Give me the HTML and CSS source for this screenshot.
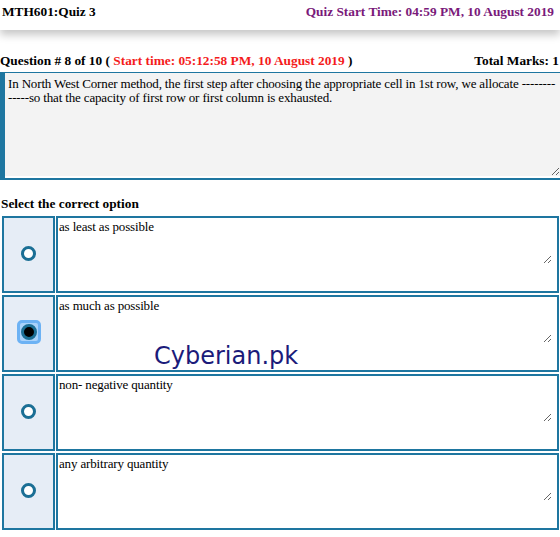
FILE: index.html
```html
<!DOCTYPE html>
<html lang="en">
<head>
<meta charset="utf-8">
<title>MTH601:Quiz 3</title>
<link rel="stylesheet" href="styles.css">
</head>
<body>
<header class="top">
  <span class="quiz-title">MTH601:Quiz 3</span>
  <span class="quiz-start">Quiz Start Time: 04:59 PM, 10 August 2019</span>
</header>
<main class="content">
  <div class="q-line">
    <span>Question # 8 of 10 ( <span class="q-time">Start time: 05:12:58 PM, 10 August 2019</span> )</span>
    <span>Total Marks: 1</span>
  </div>
  <div class="q-box">
    <textarea class="q-text" readonly>In North West Corner method, the first step after choosing the appropriate cell in 1st row, we allocate -------------so that the capacity of first row or first column is exhausted.</textarea>
  </div>
  <div class="select-label">Select the correct option</div>
  <div class="options">
    <div class="opt-radio"><span class="radio"></span></div>
    <div class="opt-cell"><textarea class="opt-text" readonly>as least as possible</textarea></div>
    <div class="opt-radio"><span class="focus-ring"><span class="radio checked"></span></span></div>
    <div class="opt-cell"><textarea class="opt-text" readonly>as much as possible</textarea></div>
    <div class="opt-radio"><span class="radio"></span></div>
    <div class="opt-cell"><textarea class="opt-text" readonly>non- negative quantity</textarea></div>
    <div class="opt-radio"><span class="radio"></span></div>
    <div class="opt-cell"><textarea class="opt-text" readonly>any arbitrary quantity</textarea></div>
  </div>
  <div class="watermark">Cyberian.pk</div>
</main>
</body>
</html>
```
FILE: styles.css
```css
html, body {
  margin: 0;
  padding: 0;
  background: #fff;
  overflow: hidden;
}
body {
  font-family: "Liberation Serif", "Times New Roman", serif;
  color: #000;
  width: 560px;
  height: 537px;
}
.top {
  height: 30px;
  box-sizing: border-box;
  display: flex;
  justify-content: space-between;
  align-items: flex-start;
  padding: 3px 6px 0 2px;
  font-weight: bold;
  font-size: 13.33px;
  line-height: 18px;
  box-shadow: 0 5px 8px rgba(0, 0, 0, 0.22);
  position: relative;
  z-index: 1;
}
.quiz-start {
  color: #7a1a7a;
}
.content {
  position: relative;
  padding-top: 22px;
}
.q-line {
  display: flex;
  justify-content: space-between;
  font-weight: bold;
  font-size: 13.33px;
  line-height: 18px;
  padding: 0 1px 2px 0;
}
.q-time {
  color: #f41c1c;
}
.q-box {
  border-top: 1px solid #1e76a0;
  border-left: 5px solid #1e76a0;
  border-bottom: 2px solid #1e76a0;
}
.q-text {
  display: block;
  width: 100%;
  box-sizing: border-box;
  height: 103px;
  margin: 0 0 2px 0;
  border: none;
  background: #f3f3f3;
  font-family: "Liberation Serif", "Times New Roman", serif;
  font-size: 13px;
  letter-spacing: -0.15px;
  line-height: 14px;
  padding: 4px 3px;
  color: #000;
  outline: none;
}
.select-label {
  font-weight: bold;
  font-size: 13.33px;
  line-height: 18px;
  padding: 15px 0 3px 1px;
}
.options {
  display: grid;
  grid-template-columns: 53px 503px;
  grid-auto-rows: 77px;
  column-gap: 1px;
  row-gap: 2px;
  padding-left: 2px;
}
.opt-radio {
  border: 2px solid #1e76a0;
  background: #e6edf6;
  display: flex;
  align-items: center;
  justify-content: center;
  padding-bottom: 3px;
}
.radio {
  width: 15px;
  height: 15px;
  border: 3px solid #1b6f95;
  border-radius: 50%;
  box-sizing: border-box;
  background: #fff;
}
.focus-ring {
  width: 24px;
  height: 24px;
  box-sizing: border-box;
  border: 3px solid #6cb2f4;
  border-radius: 5px;
  background: #a9d2fa;
  display: flex;
  align-items: center;
  justify-content: center;
}
.radio.checked {
  width: 16px;
  height: 16px;
  border: 3px solid #1b6f95;
  background: #000;
}
.opt-cell {
  border: 2px solid #1e76a0;
  background: #fff;
}
.opt-text {
  display: block;
  border: none;
  margin: 0;
  box-sizing: border-box;
  width: 494px;
  height: 46px;
  font-family: "Liberation Serif", "Times New Roman", serif;
  font-size: 13px;
  letter-spacing: -0.15px;
  line-height: 14px;
  padding: 2px 1px;
  color: #000;
  background: #fff;
  outline: none;
}
.watermark {
  position: absolute;
  left: 154px;
  top: 312px;
  font-family: "DejaVu Sans", Verdana, sans-serif;
  font-size: 24px;
  color: #1b1b7a;
  pointer-events: none;
}
```
